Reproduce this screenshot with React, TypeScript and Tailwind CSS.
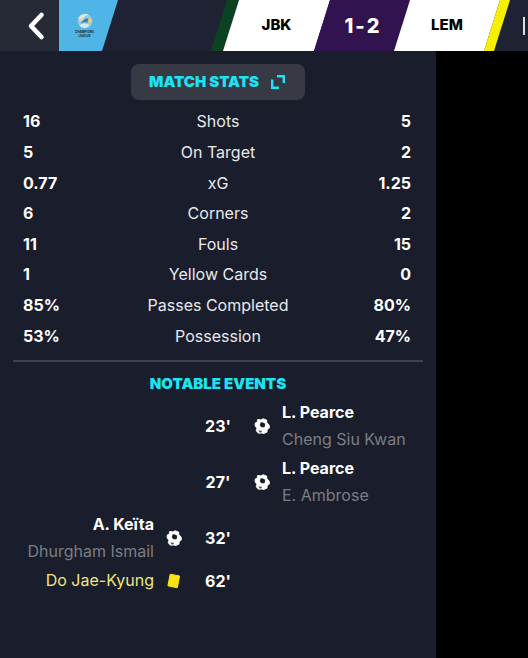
import { FC, ReactNode } from "react";
import clsx from "clsx";

type Stat = {
  label: string;
  home: string;
  away: string;
};

type MatchEvent = {
  minute: string;
  side: "home" | "away";
  type: "goal" | "card";
  player: string;
  assist?: string;
};

const stats: Stat[] = [
  { label: "Shots", home: "16", away: "5" },
  { label: "On Target", home: "5", away: "2" },
  { label: "xG", home: "0.77", away: "1.25" },
  { label: "Corners", home: "6", away: "2" },
  { label: "Fouls", home: "11", away: "15" },
  { label: "Yellow Cards", home: "1", away: "0" },
  { label: "Passes Completed", home: "85%", away: "80%" },
  { label: "Possession", home: "53%", away: "47%" },
];

const events: MatchEvent[] = [
  { minute: "23'", side: "away", type: "goal", player: "L. Pearce", assist: "Cheng Siu Kwan" },
  { minute: "27'", side: "away", type: "goal", player: "L. Pearce", assist: "E. Ambrose" },
  { minute: "32'", side: "home", type: "goal", player: "A. Keïta", assist: "Dhurgham Ismail" },
  { minute: "62'", side: "home", type: "card", player: "Do Jae-Kyung" },
];

const BallIcon: FC = () => (
  <svg viewBox="0 0 16 16" className="size-4" aria-label="Goal">
    <path
      d="M3.6 1.4 6.6 1.8 9.4.8l3.2 1.2.4 2.800 2.300 2.400.1 2.800-2 1.400-.5 2.800-3 1.300-2.400-.4-3.200.1-2.100-2.400.6-2.600L1 7.600l.3-2.700 2-1z"
      fill="#fff"
      stroke="#fff"
      strokeWidth=".8"
      strokeLinejoin="round"
    />
    <path d="m8.500 4.200 2.700 1.600-.5 3.100-3 .6-1.900-2.300.8-2.600z" fill="#1a1d2b" />
    <path d="m4.400 12.500 3.200.2.3 1.600-2.400.1z" fill="#4b4d57" />
  </svg>
);

const CardIcon: FC = () => (
  <svg viewBox="0 0 16 16" className="size-4" aria-label="Yellow card">
    <path
      d="M4.2 1.2 13.6 3 11.3 14.8 1.9 12.8z"
      fill="#fbe50d"
      stroke="#fbe50d"
      strokeLinejoin="round"
    />
  </svg>
);

const LeagueLogo: FC = () => (
  <div className="flex flex-col items-center">
    <svg viewBox="0 0 18 16" className="h-4 w-[18px]" aria-hidden="true">
      <circle cx="9" cy="8" r="7.4" fill="#8fc9e6" />
      <path d="M2 6.2C3.6 1.6 9.2-.4 13 2.2 10 2 8 3.4 7 5.6z" fill="#d8e9ee" />
      <path d="M2 8.5c2-3.8 5.5-4 8.2-2.4L8 9.5C6 8.3 4 8 2 8.5z" fill="#e4d49a" />
      <path d="M5.2 10.8c1-4 4-6 7.6-5.2-1.2 1.2-1.4 2.6-1 4.2-2-.8-4.2-.6-6.6 1z" fill="#2d7fc9" />
      <path d="M13 4.4c2 .2 3.2 1.6 3.2 3.6-.8 1.6-1.8 2.6-3.4 3-.6-2-.6-4.4.2-6.6z" fill="#e5cb85" />
      <path d="M3.6 12.4c3-2.2 6.6-2.4 9.8-.4-2.4 3.6-7.2 3.8-9.8.4z" fill="#dbe8ea" />
    </svg>
    <span className="pt-px text-center text-[3px] leading-[4px] font-extrabold text-[#20384d]">
      CHAMPIONS
      <br />
      LEAGUE
    </span>
  </div>
);

const ExpandIcon: FC = () => (
  <svg viewBox="0 0 14 14" className="size-3.5" fill="none" stroke="currentColor" strokeWidth="2.400" aria-hidden="true">
    <path d="M6 1.200h6.800V8" />
    <path d="M1.200 4.500v8.300H8" />
  </svg>
);

// parallelogram block, neighbours overlap by the 16px slant
const Slant: FC<{ className?: string; children?: ReactNode }> = (props) => {
  const { className, children } = props;

  return (
    <div
      className={clsx(
        "flex items-center justify-center [clip-path:polygon(16px_0,100%_0,calc(100%-16px)_100%,0_100%)]",
        className,
      )}
    >
      {children}
    </div>
  );
};

const Header: FC = () => (
  <header className="flex h-[51px] bg-[#1e2232]">
    <button
      type="button"
      aria-label="Back"
      className="flex w-[59px] items-center justify-center bg-[#262a36] pl-3"
    >
      <svg viewBox="0 0 18 30" className="h-[30px] w-[18px]">
        <path d="M14.5 4 4 15l10.500 11" fill="none" stroke="#fff" strokeWidth="4.600" strokeLinecap="round" strokeLinejoin="round" />
      </svg>
    </button>
    <div className="flex w-[59px] items-center bg-[#4fb5e6] pl-4 [clip-path:polygon(0_0,100%_0,calc(100%-16px)_100%,0_100%)]">
      <LeagueLogo />
    </div>
    <div className="flex flex-1 justify-end pr-[29px]">
      <Slant className="w-7 bg-[#0b4322]" />
      <Slant className="-ml-4 w-[107px] bg-white text-[15px] font-extrabold text-black">JBK</Slant>
      <Slant className="-ml-4 w-24 gap-0.5 bg-[#31134f] text-xl font-extrabold text-white">
        <span>1</span>
        <span>-</span>
        <span>2</span>
      </Slant>
      <Slant className="-ml-4 w-[106px] bg-white text-[15px] font-extrabold text-black">LEM</Slant>
      <Slant className="-ml-4 w-[26px] bg-[#f7ef02]" />
    </div>
    <div className="-ml-4 flex items-center pr-[3px]">
      <div className="h-[18px] w-0.5 bg-[#dcdde2]" />
    </div>
  </header>
);

const EventIcon: FC<{ type: MatchEvent["type"] }> = ({ type }) => (
  <div className="flex justify-center">{type === "goal" ? <BallIcon /> : <CardIcon />}</div>
);

const EventRow: FC<{ event: MatchEvent }> = (props) => {
  const { event } = props;
  const isHome = event.side === "home";

  const names = (
    <div className={clsx("whitespace-nowrap leading-[27px]", isHome && "text-right")}>
      {event.type === "goal" ? (
        <>
          <p className="font-bold">{event.player}</p>
          <p className="text-[#7b7d85]">{event.assist}</p>
        </>
      ) : (
        <p className="text-[#eee781]">{event.player}</p>
      )}
    </div>
  );

  return (
    <li className="grid grid-cols-[1fr_40px_48px_40px_1fr] items-center">
      {isHome ? names : <span />}
      {isHome ? <EventIcon type={event.type} /> : <span />}
      <span className="text-center font-bold">{event.minute}</span>
      {isHome ? <span /> : <EventIcon type={event.type} />}
      {isHome ? <span /> : names}
    </li>
  );
};

const App: FC = () => {
  return (
    <div className="flex min-h-screen flex-col bg-black font-['Inter','Liberation_Sans',sans-serif] text-base text-white">
      <Header />
      <div className="flex flex-1">
        <main className="flex-1 bg-[#1a1d2b] px-[13px] pt-[13px]">
          <div className="flex justify-center">
            <button
              type="button"
              className="flex h-9 items-center gap-3 rounded-lg bg-[#373945] pr-5 pl-[18px] text-[15px] font-black text-[#1ce4f4]"
            >
              MATCH STATS
              <ExpandIcon />
            </button>
          </div>
          <table className="mt-1.5 h-[245px] w-full table-fixed">
            <tbody>
              {stats.map((stat) => (
                <tr key={stat.label}>
                  <td className="w-1/4 pl-2.5 font-bold">{stat.home}</td>
                  <th scope="row" className="text-center font-normal text-[#e8e9ec]">
                    {stat.label}
                  </th>
                  <td className="w-1/4 pr-3 text-right font-bold">{stat.away}</td>
                </tr>
              ))}
            </tbody>
          </table>
          <section className="mt-[9px] border-t-2 border-[#3f414d] pt-2">
            <h2 className="text-center text-[15px] leading-[27px] font-black text-[#1ce4f4]">NOTABLE EVENTS</h2>
            <ul className="mt-0.5 flex flex-col gap-0.5">
              {events.map((event) => (
                <EventRow key={event.minute} event={event} />
              ))}
            </ul>
          </section>
        </main>
        <aside className="w-[92px] bg-black" />
      </div>
    </div>
  );
};

export default App;
